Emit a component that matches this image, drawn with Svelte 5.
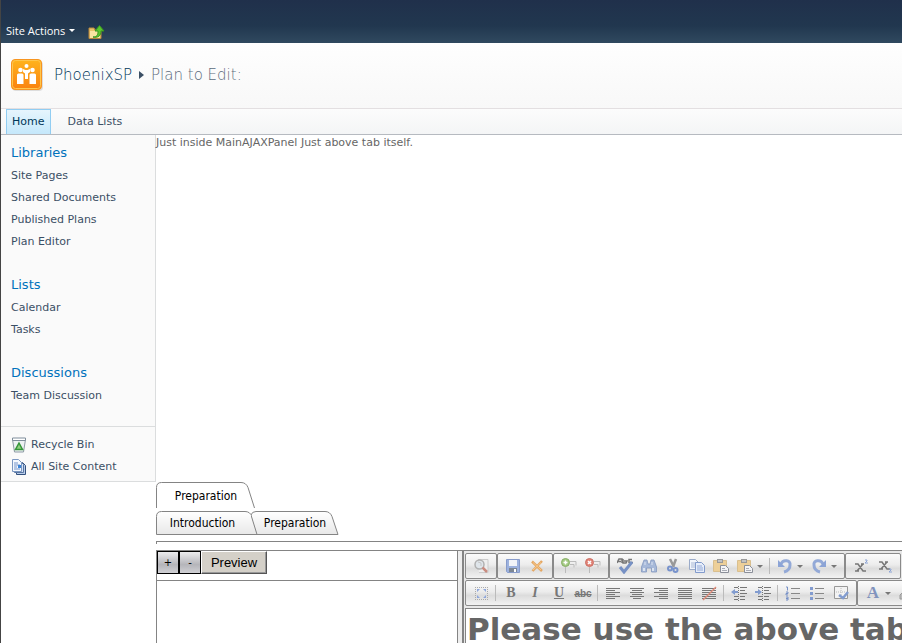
<script>
  // Quick launch sections in the left sidebar
  const sections = [
    { title: 'Libraries', links: ['Site Pages', 'Shared Documents', 'Published Plans', 'Plan Editor'] },
    { title: 'Lists', links: ['Calendar', 'Tasks'] },
    { title: 'Discussions', links: ['Team Discussion'] },
  ];

  // Editor toolbars: rows of groups, '|' is a separator
  const toolbars = [
    [
      ['zoom'],
      ['save', 'cancel'],
      ['add', 'remove'],
      ['spell', 'find', 'cut', 'copy', 'paste', 'paste-as', 'v', '|', 'undo', 'v', 'redo', 'v'],
      ['superscript', 'subscript'],
    ],
    [
      ['select', '|', 'bold', 'italic', 'underline', 'strike', '|', 'left', 'center', 'right', 'justify', 'none', '|', 'outdent', 'indent', '|', 'numbers', 'bullets', 'check'],
      ['color', 'v', 'highlight'],
    ],
  ];

  const lines = {
    left: 'M1 3.5h14M1 5.5h9M1 7.5h14M1 9.5h9M1 11.5h14M1 13.5h9',
    center: 'M1 3.5h14M3 5.5h10M1 7.5h14M3 9.5h10M1 11.5h14M4 13.5h8',
    right: 'M1 3.5h14M6 5.5h9M1 7.5h14M6 9.5h9M1 11.5h14M6 13.5h9',
    justify: 'M1 3.5h14M1 5.5h14M1 7.5h14M1 9.5h14M1 11.5h14M1 13.5h14',
    none: 'M1 3.5h14M1 5.5h14M1 7.5h14M1 9.5h14M1 11.5h14M1 13.5h14',
  };

  let activeTab = $state('Preparation');
</script>

{#snippet icon(name)}
  <svg class="icon" viewBox="0 0 16 16" aria-hidden="true">
    {#if lines[name]}
      <path d={lines[name]} stroke="#777" />
      {#if name === 'none'}<path d="M2 15L15 2" stroke="#e08a78" stroke-width="1.5" />{/if}
    {:else if name === 'zoom'}
      <path d="M5 1.5h10v13h-9" fill="#eee" stroke="#ccc" />
      <circle cx="6.500" cy="6.500" r="4.500" fill="#dfe5ea" stroke="#b0b0b0" stroke-width="1.500" />
      <path d="M5 4l3 1v3" fill="none" stroke="#c5c5c5" />
      <path d="M9.500 9.500l4.500 4.500" stroke="#c98c80" stroke-width="2.500" />
    {:else if name === 'save'}
      <path d="M1.500 1.500h13v13h-12l-1-1z" fill="#9db2de" stroke="#879bcb" />
      <path d="M4 2h8v6H4z" fill="#f2f4f8" />
      <path d="M4 10h8v4H4z" fill="#7d8794" /><path d="M9 11h2v3H9z" fill="#fff" />
    {:else if name === 'cancel'}
      <path d="M3 3.500L13 13M13 3L3.500 13" stroke="#e5a763" stroke-width="2.500" />
      <path d="M4 4.500L12 12M12 4.500L4 12" stroke="#f6c98d" />
    {:else if name === 'add' || name === 'remove'}
      <path d="M9 3.500h6v4M9 6.500h4v3M4.500 9v6" fill="none" stroke="#bbb" />
      <circle cx="4.500" cy="4.500" r="4" fill={name === 'add' ? '#a3c981' : '#e18377'} stroke={name === 'add' ? '#87ae67' : '#cb7166'} />
      {#if name === 'add'}<path d="M2.500 4.500h4M4.500 2.500v4" stroke="#fff" stroke-width="1.500" />
      {:else}<path d="M3 3l3 3M6 3L3 6" stroke="#fff" stroke-width="1.500" />{/if}
    {:else if name === 'spell'}
      <path d="M0 5l2-4h3v4M1 3.500h3M6 1v4h3l1-2H7M15 1.500h-3v3h4" fill="none" stroke="#777" stroke-width="1.500" />
      <path d="M3 9l4 5L15 4" fill="none" stroke="#7791c5" stroke-width="3" />
    {:else if name === 'find'}
      <path d="M3 2h3l1 4h2l1-4h3l2.500 7v5h-5v-4h-5v4h-5V9z" fill="#a7b9d9" stroke="#8498bf" stroke-width=".8" />
      <path d="M3 10v3M12 10v3" stroke="#eef2f8" stroke-width="1.500" /><path d="M4 4v3M11 4v3" stroke="#dbe3f1" />
    {:else if name === 'cut'}
      <path d="M5 1l4 8M11 1L8 9" stroke="#999" stroke-width="2.500" />
      <circle cx="5" cy="10.500" r="2" fill="none" stroke="#7893cc" stroke-width="2" />
      <circle cx="10.500" cy="12" r="2" fill="none" stroke="#7893cc" stroke-width="2" />
    {:else if name === 'copy'}
      <path d="M.5 1.500h6l3 3v7h-9z" fill="#f2f5fb" stroke="#9babc9" />
      <path d="M2 5h5M2 7h4M2 9h4" stroke="#a9b8d5" />
      <path d="M6.500 4.500h6l3 3v7h-9z" fill="#e6edfa" stroke="#829bcc" />
      <path d="M8 8h5M8 10h6M8 12h6" stroke="#93a9d6" />
    {:else if name === 'paste' || name === 'paste-as'}
      <path d="M.5 2.500h13v11H.5z" fill="#edcf98" stroke="#d9bf8e" />
      <path d="M4 1h6v4H4z" fill="#999" /><path d="M5 3h4" stroke="#eee" />
      <path d="M7.500 7.500h5l3 3v4h-8z" fill="#f4f4f6" stroke="#8b8f99" />
      <path d="M9 10.500h3M9 12.500h5" stroke="#a9acb5" />
    {:else if name === 'undo' || name === 'redo'}
      <g transform={name === 'redo' ? 'matrix(-1 0 0 1 16 0)' : null}>
        <path d="M4 6C6 1 14 2 13 7c0 4-2 6-6 7" fill="none" stroke="#93a9d7" stroke-width="3" />
        <path d="M1 2v7h7z" fill="#8ca4d6" />
      </g>
    {:else if name === 'superscript' || name === 'subscript'}
      <path d="M2 6h3l5 7h3M10 6l-6 7M8 6h3M2 13h4" transform={name === 'subscript' ? 'translate(0 -2)' : null} fill="none" stroke="#777" stroke-width="1.500" />
      <path d="M12 2h2v1l-2 2h3" transform={name === 'subscript' ? 'translate(0 9)' : null} fill="none" stroke="#8ca4d6" />
    {:else if name === 'select'}
      <path d="M2 2.500h13M2 14.500h13M2.500 2v13M14.500 2v13" stroke="#aaa" stroke-dasharray="1 1" />
      <path d="M4 4h3L4 7zM13 4h-3l3 3zM4 13h3l-3-3zM13 13h-3l3-3z" fill="#8da6dc" />
    {:else if name === 'outdent' || name === 'indent'}
      <path d="M3 2.500h4M9 2.500h7M9 5.500h5M9 8.500h7M9 11.500h5M3 14.500h4M9 14.500h5M3 11.500h4" stroke="#777" />
      <path d="M7.500 1v15" stroke="#777" stroke-dasharray="1 1" />
      <path d={name === 'outdent' ? 'M0 7l4-3v2h3v2H4v2z' : 'M7 7L3 4v2H0v2h3v2z'} fill="#829ccf" />
    {:else if name === 'numbers' || name === 'bullets'}
      <path d="M6 3.500h9M6 8.500h9M6 13.500h9" stroke="#888" />
      {#if name === 'numbers'}<path d="M1 2h1.500v3.500M1 7h2v1.500H1V10h2M1 12h2v3H1M1 13.500h2" fill="none" stroke="#7690c6" />
      {:else}<path d="M1 2h3v3H1zM1 7h3v3H1zM1 12h3v3H1z" fill="#829bcf" />{/if}
    {:else if name === 'check'}
      <path d="M1.500 1.500h13v12h-13z" fill="#f3f3f3" stroke="#999" />
      <path d="M8 3v8M3 7h10" stroke="#bbb" stroke-dasharray="1 1" />
      <path d="M6 10l4 3 5-6" fill="none" stroke="#829ccf" stroke-width="2.500" />
    {:else if name === 'highlight'}
      <path d="M1 10l8-8 4 4-8 8H1z" fill="#bbb" stroke="#999" />
    {/if}
  </svg>
{/snippet}

<div class="page">
  <header class="ribbon">
    <button class="site-actions">Site Actions <span class="caret"></span></button>
    <button class="navigate-up" aria-label="Navigate up">
      <svg width="17" height="16" viewBox="0 0 17 16">
        <path d="M1 4h5l1 2h6v8.500H1z" fill="#e9c56c" stroke="#b9873c" />
        <path d="M2 7h10v7H2z" fill="#fae5a2" />
        <path d="M5 13c4 0 5-2 5-6H7l4.500-5.500L16 7h-3c0 5-3 7-8 6z" fill="#5cc52f" stroke="#37961f" />
      </svg>
    </button>
  </header>

  <div class="title-area">
    <svg class="logo" width="32" height="32" viewBox="0 0 32 32" aria-hidden="true">
      <defs>
        <linearGradient id="orange" x1="0" y1="0" x2="0" y2="1">
          <stop offset="0" stop-color="#ffb41c" />
          <stop offset="1" stop-color="#fa8210" />
        </linearGradient>
      </defs>
      <rect x="1" y="2" width="31" height="30" rx="4" fill="#ddd" />
      <rect x=".5" y=".5" width="30" height="30" rx="3.500" fill="url(#orange)" stroke="#f79520" />
      <rect x="1.500" y="1.500" width="28" height="28" rx="3" fill="none" stroke="#ffc64d" />
      <g fill="#fff">
        <circle cx="15.500" cy="7" r="2" />
        <circle cx="9.500" cy="11" r="2.300" />
        <circle cx="21.500" cy="11" r="2.300" />
        <path d="M12 10l2.500 1h2l2.500-1v3l-2 1.500V20h-3v-5.500L12 13z" />
        <path d="M6 16q0-1.500 1.500-1.500h3.500Q12.500 14.500 12.500 16v9H6zM18.500 16q0-1.500 1.500-1.500h3.500Q25 14.500 25 16v9h-6.500z" />
      </g>
    </svg>
    <h1>
      <a href="#site">PhoenixSP</a>
      <svg width="5" height="8" viewBox="0 0 5 8" aria-hidden="true"><path d="M0 0l5 4-5 4z" fill="#3b4f65" /></svg>
      <span>Plan to Edit:</span>
    </h1>
  </div>

  <nav class="top-nav">
    <a class="selected" href="#home">Home</a>
    <a href="#data">Data Lists</a>
  </nav>

  <div class="body">
    <aside>
      <nav class="quick-launch">
        {#each sections as section}
          <section>
            <h2><a href="#section">{section.title}</a></h2>
            <ul>
              {#each section.links as link}
                <li><a href="#link">{link}</a></li>
              {/each}
            </ul>
          </section>
        {/each}
      </nav>
      <div class="site-links">
        <a href="#bin">
          <svg width="16" height="16" viewBox="0 0 16 16" aria-hidden="true">
            <path d="M1.500 2.500l2 12.500h9l2-12.500z" fill="#edf1f3" stroke="#8d9aa5" />
            <path d="M1.500 1h13v2.500h-13z" fill="#fff" stroke="#7e8d9b" />
            <path d="M8 6l3.500 6.500h-7z" fill="#8fd07e" stroke="#35953a" stroke-width="1.500" />
          </svg>
          Recycle Bin
        </a>
        <a href="#all">
          <svg width="16" height="16" viewBox="0 0 16 16" aria-hidden="true">
            <path d="M5.500 3.500h6l3 3v9h-9z" fill="#b9cdea" stroke="#33517e" />
            <path d="M3.500 2.500h6l3 3v8h-9z" fill="#d6e3f6" stroke="#5976a3" />
            <path d="M1.500.5h6l3 3v9h-9z" fill="#f4f8fe" stroke="#7b97c1" />
            <path d="M3 4h4M3 6h6M3 8h3M3 10h6" stroke="#7292c8" />
            <path d="M7 6h3v3H7z" fill="#3a83d6" />
          </svg>
          All Site Content
        </a>
      </div>
    </aside>

    <main>
      <p class="notice">Just inside MainAJAXPanel Just above tab itself.</p>

      <div class="tabs">
        <button class="tab front">
          <svg width="100" height="27" viewBox="0 0 100 27" aria-hidden="true">
            <path d="M.5 26V5.500q0-5 5-5H85q5 0 7 5l6.500 20.500" fill="#fff" stroke="#848484" />
          </svg>
          <span>Preparation</span>
        </button>
      </div>
      <div class="tabs lower">
        {#each ['Introduction', 'Preparation'] as tab}
          <button class="tab" class:second={tab === 'Preparation'} onclick={() => (activeTab = tab)}>
            {#if tab === 'Introduction'}
              <svg width="103" height="24" viewBox="0 0 103 24" aria-hidden="true">
                <path d="M.5 23.500V5.500q0-5 5-5H89q5 0 7 5l6 18z" fill="url(#tab-fill)" stroke="#848484" />
              </svg>
            {:else}
              <svg width="88" height="24" viewBox="0 0 88 24" aria-hidden="true">
                <defs>
                  <linearGradient id="tab-fill" x1="0" y1="0" x2="0" y2="1">
                    <stop offset="0" stop-color="#fff" />
                    <stop offset="1" stop-color="#e8e8e8" />
                  </linearGradient>
                </defs>
                <path d="M6 23.500L0 4q1-3.500 5-3.500h69q5 0 7 5l6 18z" fill="url(#tab-fill)" stroke="#848484" />
              </svg>
            {/if}
            <span>{tab}</span>
          </button>
        {/each}
      </div>

      <div class="rule"></div>

      <div class="splitter">
        <div class="pane">
          <div class="pane-bar">
            <button class="small">+</button>
            <button class="small">-</button>
            <button class="preview">Preview</button>
          </div>
          <div class="pane-body"></div>
        </div>
        <div class="split-bar"></div>
        <div class="editor">
          {#each toolbars as row}
            <div class="toolbar">
              {#each row as group}
                <div class="group">
                  {#each group as tool}
                    {#if tool === '|'}
                      <span class="separator"></span>
                    {:else if tool === 'v'}
                      <button class="drop" aria-label="More"><span class="caret"></span></button>
                    {:else if tool === 'bold'}
                      <button class="tool letter" aria-label="Bold"><b>B</b></button>
                    {:else if tool === 'italic'}
                      <button class="tool letter" aria-label="Italic"><i>I</i></button>
                    {:else if tool === 'underline'}
                      <button class="tool letter" aria-label="Underline"><u>U</u></button>
                    {:else if tool === 'strike'}
                      <button class="tool letter abc" aria-label="Strikethrough"><s>abc</s></button>
                    {:else if tool === 'color'}
                      <button class="tool letter color" aria-label="Text color">A</button>
                    {:else}
                      <button class="tool" aria-label={tool}>{@render icon(tool)}</button>
                    {/if}
                  {/each}
                </div>
              {/each}
            </div>
          {/each}
          <div class="document">
            <h2>Please use the above tab</h2>
          </div>
        </div>
      </div>
    </main>
  </div>
</div>

<style>
  :global(body) {
    overflow: hidden;
  }

  .page {
    display: flex;
    flex-direction: column;
    height: 100vh;
    box-sizing: border-box;
    overflow: hidden;
    border-left: 1px solid #444;
    background: #fff;
    color: #3b4f65;
    font-family: 'DejaVu Sans', Verdana, sans-serif;
    font-size: 11px;
  }

  a {
    color: inherit;
    text-decoration: none;
  }

  button {
    margin: 0;
    padding: 0;
    border: none;
    background: none;
    color: inherit;
    font: inherit;
  }

  h1, h2, p, ul {
    margin: 0;
    padding: 0;
    font-weight: normal;
    list-style: none;
  }

  .caret {
    display: inline-block;
    border: 3px solid transparent;
    border-top-color: currentColor;
    border-bottom: none;
  }

  .ribbon {
    display: flex;
    align-items: flex-end;
    gap: 13px;
    flex: none;
    height: 43px;
    box-sizing: border-box;
    padding: 0 5px 3px;
    background: linear-gradient(#20304b, #21374f 60%, #30495f);
    color: #fff;
  }

  .site-actions {
    display: flex;
    align-items: center;
    gap: 4px;
    height: 20px;
    font-family: 'Open Sans', Tahoma, sans-serif;
  }

  .navigate-up {
    height: 16px;
  }

  .navigate-up svg {
    display: block;
  }

  .title-area {
    display: flex;
    align-items: center;
    gap: 11px;
    flex: none;
    height: 66px;
    box-sizing: border-box;
    padding: 0 10px 2px;
    background: linear-gradient(#fefefe, #f8f8f8);
    border-bottom: 1px solid #e3dfe1;
  }

  h1 {
    display: flex;
    align-items: center;
    gap: 7px;
    font-size: 15px;
    font-weight: 200;
    line-height: 20px;
  }

  h1 a {
    color: #003759;
  }

  h1 span {
    color: #5c6b7c;
  }

  .top-nav {
    display: flex;
    flex: none;
    gap: 10px;
    padding-left: 5px;
    background: linear-gradient(#fcfcfc, #f4f5f6);
    border-bottom: 1px solid #b6bac0;
  }

  .top-nav a {
    padding: 0 6px 0 5px;
    border: 1px solid transparent;
    border-bottom: none;
    line-height: 24px;
  }

  .top-nav .selected {
    border-color: #91cdf2;
    background: linear-gradient(#e6f5fd, #c5e8fb);
    color: #003759;
  }

  .body {
    display: flex;
    flex: 1;
    min-height: 0;
  }

  aside {
    flex: none;
    align-self: flex-start;
    width: 154px;
    background: #fafafa;
    border-right: 1px solid #dbddde;
    border-bottom: 1px solid #dbddde;
    line-height: 22px;
  }

  .quick-launch {
    display: flex;
    flex-direction: column;
    gap: 21px;
    padding: 7px 10px 19px;
  }

  .quick-launch h2 {
    color: #0072bc;
    font-size: 13px;
    line-height: 22px;
  }

  .quick-launch ul {
    padding-top: 1px;
  }

  .site-links {
    padding: 7px 10px 3px;
    border-top: 1px solid #dbddde;
  }

  .site-links a {
    display: flex;
    align-items: center;
    gap: 4px;
  }

  main {
    display: flex;
    flex-direction: column;
    flex: 1;
    min-width: 0;
  }

  .notice {
    min-height: 347px;
    color: #666;
    line-height: 16px;
  }

  .tabs {
    display: flex;
    flex: none;
    height: 29px;
    color: #000;
    font-family: 'DejaVu Sans Condensed', 'Noto Sans', Tahoma, sans-serif;
    font-size: 12px;
  }

  .tabs.lower {
    height: 24px;
  }

  .tab {
    display: grid;
    align-self: flex-start;
  }

  .tab svg,
  .tab span {
    grid-area: 1 / 1;
  }

  .tab span {
    align-self: center;
    padding-right: 10px;
    line-height: 14px;
  }

  .tab.front span {
    padding-right: 0;
  }

  .tab.second {
    margin-left: -8px;
  }

  .tab.second span {
    padding-right: 0;
  }

  .rule {
    flex: none;
    height: 2px;
    margin: 6px 0;
    border-top: 1px solid #848484;
    border-left: 1px solid #848484;
  }

  .splitter {
    display: flex;
    flex: 1;
    min-height: 0;
    border-top: 1px solid #848484;
    border-left: 1px solid #848484;
  }

  .pane {
    display: flex;
    flex-direction: column;
    flex: 0 0 300px;
  }

  .pane-bar {
    display: flex;
    height: 29px;
    color: #000;
  }

  .pane-bar button {
    height: 23px;
  }

  .small {
    width: 22px;
    border: 1px solid #000;
    background: linear-gradient(#ececee, #b5b5ba 60%, #d0d0d4);
    font-size: 10px;
  }

  .preview {
    width: 66px;
    border: 1px solid;
    border-color: #fff #555 #555 #fff;
    background: #d4d0c8;
    box-shadow: inset -1px -1px #999;
    font-family: 'Liberation Sans', Arial, sans-serif;
    font-size: 13px;
  }

  .pane-body {
    flex: 1;
    border-top: 1px solid #848484;
  }

  .split-bar {
    flex: none;
    width: 4px;
    background: #ededed;
    border-left: 1px solid #848484;
    border-right: 2px solid #848484;
  }

  .editor {
    display: flex;
    flex-direction: column;
    flex: 1;
    gap: 1px;
    min-width: 0;
    overflow: hidden;
    padding: 2px 0 0 1px;
    background: #e8e8e8;
  }

  .toolbar {
    display: flex;
    flex: none;
  }

  .group {
    display: flex;
    align-items: center;
    flex: none;
    height: 26px;
    box-sizing: border-box;
    padding: 0 3px;
    border: 1px solid #8a8a8a;
    border-radius: 2px;
    background: linear-gradient(#fbfbfb, #ececec 45%, #dcdcdc 60%, #f2f2f2);
    color: #777;
  }

  .tool {
    display: flex;
    align-items: center;
    justify-content: center;
    flex: none;
    width: 24px;
    height: 22px;
  }

  .icon {
    width: 16px;
    height: 16px;
    fill: none;
  }

  .letter {
    font-family: 'Liberation Serif', 'Times New Roman', serif;
    font-size: 14px;
    font-weight: bold;
  }

  .abc {
    font-family: 'Liberation Sans', Arial, sans-serif;
    font-size: 10px;
  }

  .color {
    color: #8093bd;
    font-size: 17px;
  }

  .drop {
    display: flex;
    flex: none;
    width: 10px;
  }

  .separator {
    flex: none;
    width: 1px;
    height: 16px;
    margin: 0 3px 0 2px;
    background: #bbb;
  }

  .document {
    flex: 1;
    margin-top: 1px;
    padding: 4px 1px;
    border-top: 1px solid #848484;
    border-left: 1px solid #848484;
    background: #fff;
    color: #666;
    white-space: nowrap;
  }

  .document h2 {
    font-size: 31px;
    font-weight: bold;
    line-height: 32px;
  }
</style>
